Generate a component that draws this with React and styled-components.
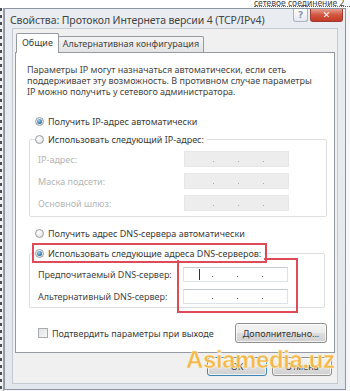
import React from "react";
import styled, { createGlobalStyle, css } from "styled-components";

const GlobalStyle = createGlobalStyle`
  html, body { margin: 0; padding: 0; background: #fff; }
  body { font-family: "Noto Sans", "Liberation Sans", sans-serif; }
`;

const Screen = styled.div`
  position: relative;
  width: 350px;
  height: 391px;
  overflow: hidden;
  display: flex;
  flex-direction: column;
  background: #f7f7f7;
  font-family: "Noto Sans", "Liberation Sans", sans-serif;
  color: #3a3a3a;
`;

const BackStrip = styled.div`
  height: 8px;
  flex: none;
  display: flex;
  justify-content: flex-end;
  overflow: hidden;
  background: #fff;
`;

const BackCaption = styled.span`
  width: 96px;
  margin-top: -2px;
  font-size: 8.5px;
  line-height: 9px;
  white-space: nowrap;
  color: #444;
  border-bottom: 1px dotted #666;
  height: 8px;
`;

const Row = styled.div`
  display: flex;
  flex: 1;
`;

const LeftEdge = styled.div`
  width: 4px;
  flex: none;
  background:
    repeating-linear-gradient(to bottom, #4a4f57 0 3px, transparent 3px 7px) 0 0 / 2px 100% no-repeat,
    linear-gradient(#9aa1aa, #9aa1aa) 3px 0 / 1px 100% no-repeat,
    #eef0f2;
`;

const Window = styled.div`
  width: 342px;
  height: 382px;
  flex: none;
  box-sizing: border-box;
  border: 1px solid #8d97a3;
  background: linear-gradient(#e9edf2, #e2e7ed);
  display: flex;
  flex-direction: column;
`;

const TitleBar = styled.div`
  height: 19px;
  flex: none;
  display: flex;
  align-items: flex-start;
  padding-left: 5px;
`;

const Title = styled.div`
  flex: 1;
  font-size: 10.5px;
  line-height: 15px;
  padding-top: 4px;
  color: #444;
  white-space: nowrap;
  letter-spacing: -0.1px;
`;

const CaptionButtons = styled.div`
  display: flex;
  gap: 2px;
  margin-right: 2px;
`;

const CaptionButton = styled.div`
  height: 13px;
  box-sizing: border-box;
  border-radius: 0 0 3px 3px;
  display: flex;
  align-items: center;
  justify-content: center;
  font-family: "DejaVu Sans", sans-serif;
  font-size: 9px;
  font-weight: bold;
  ${(p) =>
    p.close
      ? css`
          width: 33px;
          border: 1px solid #9c3b33;
          border-top: none;
          background: linear-gradient(#e7a093, #d2553f 50%, #c53a26);
          color: #fff;
        `
      : css`
          width: 15px;
          border: 1px solid #aab3bf;
          border-top: none;
          background: linear-gradient(#fbfcfd, #e6eaef);
          color: #8a95a2;
        `}
`;

const Client = styled.div`
  flex: 1;
  margin: 0 7px 5px;
  border: 1px solid #c3cad2;
  background: #f0f0f0;
  padding: 4px 2px 0;
  display: flex;
  flex-direction: column;
`;

const Tabs = styled.div`
  height: 20px;
  display: flex;
  align-items: flex-end;
  padding-left: 1px;
  margin-bottom: -1px;
  position: relative;
  z-index: 1;
`;

const Tab = styled.div`
  box-sizing: border-box;
  font-size: 9px;
  line-height: 14px;
  white-space: nowrap;
  border: 1px solid #959aa3;
  border-bottom: none;
  border-radius: 2px 2px 0 0;
  ${(p) =>
    p.active
      ? css`
          height: 20px;
          padding: 2px 5px 0;
          background: #fff;
        `
      : css`
          height: 16px;
          padding: 0 4px;
          margin-left: -1px;
          margin-bottom: 1px;
          background: linear-gradient(#f4f4f4, #e3e3e3);
          color: #444;
        `}
`;

const Panel = styled.div`
  height: 301px;
  box-sizing: border-box;
  border: 1px solid #959aa3;
  background: #fff;
  display: flex;
  flex-direction: column;
  font-size: 9px;
`;

const Intro = styled.div`
  margin: 11px 0 0 11px;
  line-height: 11px;
  white-space: nowrap;
  color: #444;
`;

const Option = styled.div`
  height: 14px;
  display: flex;
  align-items: center;
  gap: 4px;
  margin: ${(p) => p.$top}px 0 0 19px;
  white-space: nowrap;
`;

const Radio = styled.span`
  width: 9px;
  height: 9px;
  box-sizing: border-box;
  border-radius: 50%;
  flex: none;
  border: 1px solid #9a9da1;
  background: radial-gradient(circle at 40% 35%, #fff 0, #e4e4e4 75%);
  display: inline-flex;
  align-items: center;
  justify-content: center;
  ${(p) =>
    p.checked &&
    css`
      &::after {
        content: "";
        width: 5px;
        height: 5px;
        border-radius: 50%;
        background: radial-gradient(circle at 40% 35%, #9ad6f5, #2a6da4 70%);
      }
    `}
`;

const Group = styled.div`
  margin: ${(p) => p.$top}px ${(p) => p.$right}px 0 13px;
  display: flex;
  flex-direction: column;
`;

const Legend = styled.div`
  height: 14px;
  display: flex;
  padding-left: 6px;
  position: relative;
  z-index: 1;
`;

const LegendInner = styled.div`
  display: flex;
  align-items: center;
  gap: 4px;
  background: #fff;
  padding-right: 3px;
  white-space: nowrap;
  ${(p) =>
    p.highlight &&
    css`
      outline: 2px solid #df4a58;
      outline-offset: 1px;
    `}
`;

const GroupBox = styled.div`
  position: relative;
  margin-top: -7px;
  border: 1px solid #dcdfe2;
  border-radius: 2px;
  padding: ${(p) => p.$pad};
`;

const FieldRow = styled.div`
  height: 22px;
  display: grid;
  grid-template-columns: ${(p) => p.$label}px 105px;
  align-items: center;
  color: ${(p) => (p.disabled ? "#b5b5b5" : "#444")};
  white-space: nowrap;
`;

const AddressField = styled.div`
  height: ${(p) => (p.disabled ? 16 : 15)}px;
  box-sizing: border-box;
  display: flex;
  align-items: center;
  padding-left: 28px;
  gap: 24px;
  position: relative;
  ${(p) =>
    p.disabled
      ? css`
          background: #ededed;
          border: 1px solid #e6e6e6;
          color: #a8a8a8;
        `
      : css`
          background: #fff;
          border: 1px solid #dde2e8;
          border-top-color: #c3c9d1;
          color: #555;
        `}
`;

const Dot = styled.span`
  width: 1px;
  height: 1px;
  margin-top: 4px;
  background: currentColor;
  box-shadow: 0 0 0.6px currentColor;
`;

const Caret = styled.span`
  position: absolute;
  left: 15px;
  top: 1px;
  width: 1px;
  height: 11px;
  background: #333;
`;

const Highlight = styled.div`
  position: absolute;
  left: 147px;
  top: 4px;
  width: 121px;
  height: 55px;
  box-sizing: border-box;
  border: 2px solid #df4a58;
  pointer-events: none;
`;

const Bottom = styled.div`
  margin: 15px 7px 0 22px;
  height: 20px;
  display: flex;
  align-items: center;
`;

const Check = styled.span`
  width: 10px;
  height: 10px;
  box-sizing: border-box;
  border: 1px solid #a7aaae;
  background: linear-gradient(135deg, #e2e3e5, #f6f6f6);
  margin-right: 4px;
  flex: none;
`;

const Button = styled.div`
  box-sizing: border-box;
  height: ${(p) => p.$h}px;
  width: ${(p) => p.$w}px;
  display: flex;
  align-items: center;
  justify-content: center;
  border: 1px solid ${(p) => (p.primary ? "#3c87b8" : "#8f8f8f")};
  border-radius: 3px;
  background: linear-gradient(#f3f3f3, #ebebeb 50%, #dedede 51%, #d0d0d0);
  box-shadow: inset 0 0 0 1px rgba(255, 255, 255, 0.7);
  font-size: 9px;
  color: #333;
  white-space: nowrap;
`;

const Spacer = styled.div`
  flex: 1;
`;

const Footer = styled.div`
  display: flex;
  justify-content: flex-end;
  gap: 5px;
  padding: 4px 3px 0 0;
`;

const Watermark = styled.div`
  position: absolute;
  left: 186px;
  top: 346px;
  font-family: "Liberation Sans", Arial, sans-serif;
  font-weight: bold;
  font-size: 24px;
  letter-spacing: -0.4px;
  color: rgba(242, 172, 48, 0.85);
  -webkit-text-stroke: 0.5px rgba(255, 244, 210, 0.9);
  text-shadow: 0 0 1.5px rgba(255, 255, 255, 0.9);
  pointer-events: none;
`;

const ipRows = ["IP-адрес:", "Маска подсети:", "Основной шлюз:"];

function Address({ disabled, caret }) {
  return (
    <AddressField disabled={disabled}>
      {caret && <Caret />}
      <Dot />
      <Dot />
      <Dot />
    </AddressField>
  );
}

export default function App() {
  return (
    <>
      <GlobalStyle />
      <Screen>
        <BackStrip>
          <BackCaption>сетевое соединение 2</BackCaption>
        </BackStrip>
        <Row>
          <LeftEdge />
          <Window>
            <TitleBar>
              <Title>Свойства: Протокол Интернета версии 4 (TCP/IPv4)</Title>
              <CaptionButtons>
                <CaptionButton>?</CaptionButton>
                <CaptionButton close>✕</CaptionButton>
              </CaptionButtons>
            </TitleBar>
            <Client>
              <Tabs>
                <Tab active>Общие</Tab>
                <Tab>Альтернативная конфигурация</Tab>
              </Tabs>
              <Panel>
                <Intro>
                  Параметры IP могут назначаться автоматически, если сеть
                  <br />
                  поддерживает эту возможность. В противном случае параметры
                  <br />
                  IP можно получить у сетевого администратора.
                </Intro>
                <Option $top={17}>
                  <Radio checked />
                  Получить IP-адрес автоматически
                </Option>
                <Group $top={4} $right={7}>
                  <Legend>
                    <LegendInner>
                      <Radio />
                      Использовать следующий IP-адрес:
                    </LegendInner>
                  </Legend>
                  <GroupBox $pad="8px 0 2px 8px">
                    {ipRows.map((label) => (
                      <FieldRow key={label} disabled $label={146}>
                        {label}
                        <Address disabled />
                      </FieldRow>
                    ))}
                  </GroupBox>
                </Group>
                <Option $top={9}>
                  <Radio />
                  Получить адрес DNS-сервера автоматически
                </Option>
                <Group $top={6} $right={9}>
                  <Legend>
                    <LegendInner highlight>
                      <Radio checked />
                      Использовать следующие адреса DNS-серверов:
                    </LegendInner>
                  </Legend>
                  <GroupBox $pad="9px 0 0 8px">
                    <FieldRow $label={145}>
                      Предпочитаемый DNS-сервер:
                      <Address caret />
                    </FieldRow>
                    <FieldRow $label={145}>
                      Альтернативный DNS-сервер:
                      <Address />
                    </FieldRow>
                    <Highlight />
                  </GroupBox>
                </Group>
                <Bottom>
                  <Check />
                  Подтвердить параметры при выходе
                  <Spacer />
                  <Button $w={92} $h={20}>
                    Дополнительно...
                  </Button>
                </Bottom>
              </Panel>
              <Footer>
                <Button primary $w={60} $h={19}>
                  OK
                </Button>
                <Button $w={60} $h={19}>
                  Отмена
                </Button>
              </Footer>
            </Client>
          </Window>
        </Row>
        <Watermark>Asiamedia.uz</Watermark>
      </Screen>
    </>
  );
}
